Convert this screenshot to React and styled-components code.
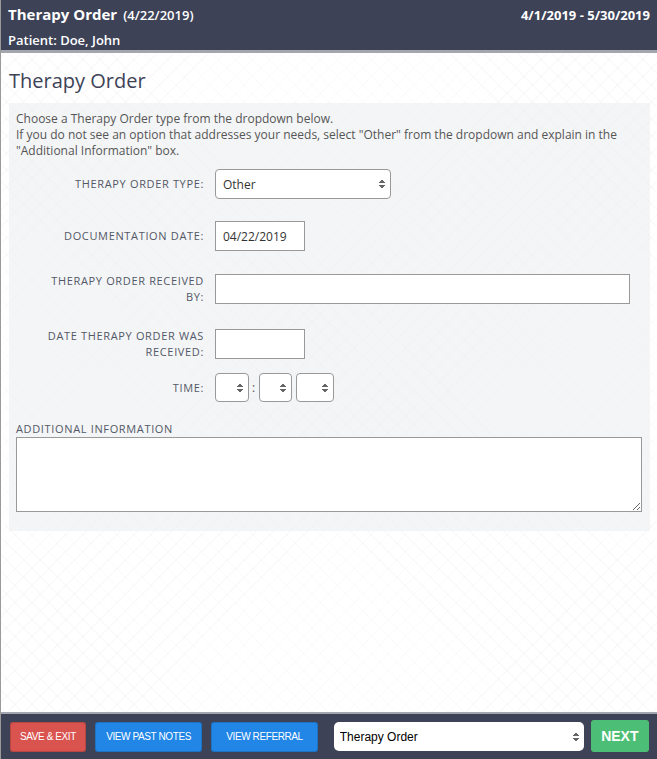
import React from "react";
import styled, { createGlobalStyle } from "styled-components";

const Global = createGlobalStyle`
html, body { margin: 0; padding: 0; height: 100%; }
body { font-family: "Open Sans", "Noto Sans", sans-serif; color: #444; }
#root { height: 100%; }
* { box-sizing: border-box; }
`;

const Page = styled.div`
display: flex;
flex-direction: column;
height: 100vh;
background-color: #fff;
background-image:
  repeating-linear-gradient(45deg, rgba(0,0,0,0.018) 0 1px, transparent 1px 12px),
  repeating-linear-gradient(-45deg, rgba(0,0,0,0.018) 0 1px, transparent 1px 12px);
border-left: 1px solid #9a9a9a;
`;

const Header = styled.header`
background: #3d4257;
color: #fff;
height: 53px;
padding: 3px 7px 0 7px;
border-bottom: 3px solid #a3a6ae;
display: flex;
justify-content: space-between;
`;

const HeadLeft = styled.div`
display: flex;
flex-direction: column;
`;

const HeadTitle = styled.div`
font-size: 15px;
font-weight: 700;
line-height: 22px;
span { font-size: 13px; font-weight: 600; margin-left: 6px; }
`;

const Patient = styled.div`
font-size: 13px;
font-weight: 600;
margin-top: 5px;
line-height: 18px;
`;

const Range = styled.div`
font-size: 13px;
font-weight: 700;
line-height: 24px;
`;

const Main = styled.main`
flex: 1;
padding: 14px 7px 0 8px;
`;

const Title = styled.h1`
margin: 0 0 8px;
font-size: 20px;
font-weight: 400;
color: #3d4257;
line-height: 28px;
`;

const Panel = styled.section`
background: rgba(236, 238, 242, 0.6);
padding: 8px 8px 19px 7px;
`;

const Intro = styled.p`
margin: 0 0 10px;
font-size: 12px;
line-height: 16px;
color: #555;
`;

const Row = styled.div`
display: flex;
align-items: center;
gap: 11px;
margin-bottom: ${p => p.$mb}px;
`;

const Label = styled.label`
width: 188px;
flex: none;
padding-left: 26px;
text-align: right;
font-size: 11px;
letter-spacing: 0.65px;
text-transform: uppercase;
color: #535866;
line-height: 16px;
`;

const SelectWrap = styled.div`
position: relative;
display: inline-flex;
margin-left: ${p => p.$ml || 0}px;
&::after {
  content: "";
  position: absolute;
  right: 6px;
  top: 50%;
  width: 6px;
  height: 10px;
  transform: translateY(-50%);
  background:
    linear-gradient(to bottom right, transparent 50%, #666 50%) 0 0 / 3px 4px no-repeat,
    linear-gradient(to bottom left, transparent 50%, #666 50%) 3px 0 / 3px 4px no-repeat,
    linear-gradient(to top right, transparent 50%, #666 50%) 0 6px / 3px 4px no-repeat,
    linear-gradient(to top left, transparent 50%, #666 50%) 3px 6px / 3px 4px no-repeat;
  pointer-events: none;
}
`;

const Select = styled.select`
appearance: none;
width: ${p => p.$w}px;
height: ${p => p.$h || 30}px;
border: 1px solid #999;
border-radius: 4px;
background: #fff;
font-family: inherit;
font-size: 12px;
color: #333;
padding: 0 7px;
`;

const Input = styled.input`
width: ${p => p.$w}px;
height: 30px;
border: 1px solid #999;
border-radius: 0;
background: #fff;
font-family: inherit;
font-size: 12px;
color: #333;
padding: 0 7px;
`;

const TimeGroup = styled.div`
display: flex;
align-items: center;
`;

const Colon = styled.span`
font-size: 12px;
color: #555;
margin: 0 4px 0 3px;
`;

const AddLabel = styled.div`
font-size: 11px;
letter-spacing: 0.65px;
color: #535866;
margin: 0 0 1px;
line-height: 14px;
`;

const TextArea = styled.textarea`
display: block;
width: 626px;
height: 75px;
border: 1px solid #999;
border-radius: 0;
background: #fff;
`;

const Footer = styled.footer`
background: #3d4257;
height: 47px;
border-top: 2px solid #a3a6ae;
display: flex;
align-items: center;
padding: 0 8px 0 9px;
gap: 9px;
`;

const Btn = styled.button`
height: 30px;
width: ${p => p.$w}px;
border: 1px solid rgba(0,0,0,0.15);
border-radius: 3px;
background: ${p => p.$bg};
color: #fff;
font-family: "Liberation Sans", Arial, sans-serif;
font-size: 10px;
letter-spacing: -0.4px;
text-transform: uppercase;
padding: 0;
`;

const NavSelectWrap = styled(SelectWrap)`
margin-left: 7px;
&::after { right: 5px; }
`;

const NavSelect = styled(Select)`
font-family: "Liberation Sans", Arial, sans-serif;
font-size: 12px;
color: #000;
border-radius: 5px;
border: none;
padding: 0 6px;
`;

const Next = styled.button`
height: 32px;
width: 59px;
margin-left: -2px;
margin-top: -2px;
border: none;
border-radius: 3px;
background: #4cbe75;
color: #fff;
font-family: "Liberation Sans", Arial, sans-serif;
font-size: 14px;
font-weight: 700;
`;

export default function App() {
  return (
    <>
      <Global />
      <Page>
        <Header>
          <HeadLeft>
            <HeadTitle>Therapy Order<span>(4/22/2019)</span></HeadTitle>
            <Patient>Patient: Doe, John</Patient>
          </HeadLeft>
          <Range>4/1/2019 - 5/30/2019</Range>
        </Header>
        <Main>
          <Title>Therapy Order</Title>
          <Panel>
            <Intro>
              Choose a Therapy Order type from the dropdown below.<br />
              If you do not see an option that addresses your needs, select "Other" from the dropdown and explain in the "Additional Information" box.
            </Intro>
            <Row $mb={22}>
              <Label>Therapy Order Type:</Label>
              <SelectWrap>
                <Select $w={176} defaultValue="Other">
                  <option>Other</option>
                </Select>
              </SelectWrap>
            </Row>
            <Row $mb={22}>
              <Label>Documentation Date:</Label>
              <Input $w={90} defaultValue="04/22/2019" />
            </Row>
            <Row $mb={23}>
              <Label>Therapy Order Received By:</Label>
              <Input $w={415} />
            </Row>
            <Row $mb={13}>
              <Label>Date Therapy Order Was Received:</Label>
              <Input $w={90} />
            </Row>
            <Row $mb={20}>
              <Label>Time:</Label>
              <TimeGroup>
                <SelectWrap><Select $w={34} $h={29} /></SelectWrap>
                <Colon>:</Colon>
                <SelectWrap><Select $w={33} $h={29} /></SelectWrap>
                <SelectWrap $ml={4}><Select $w={38} $h={29} /></SelectWrap>
              </TimeGroup>
            </Row>
            <AddLabel>ADDITIONAL INFORMATION</AddLabel>
            <TextArea />
          </Panel>
        </Main>
        <Footer>
          <Btn $bg="#d9534f" $w={77}>Save &amp; Exit</Btn>
          <Btn $bg="#2186e6" $w={109}>View Past Notes</Btn>
          <Btn $bg="#2186e6" $w={108}>View Referral</Btn>
          <NavSelectWrap>
            <NavSelect $w={250} $h={29} defaultValue="Therapy Order">
              <option>Therapy Order</option>
            </NavSelect>
          </NavSelectWrap>
          <Next>NEXT</Next>
        </Footer>
      </Page>
    </>
  );
}
